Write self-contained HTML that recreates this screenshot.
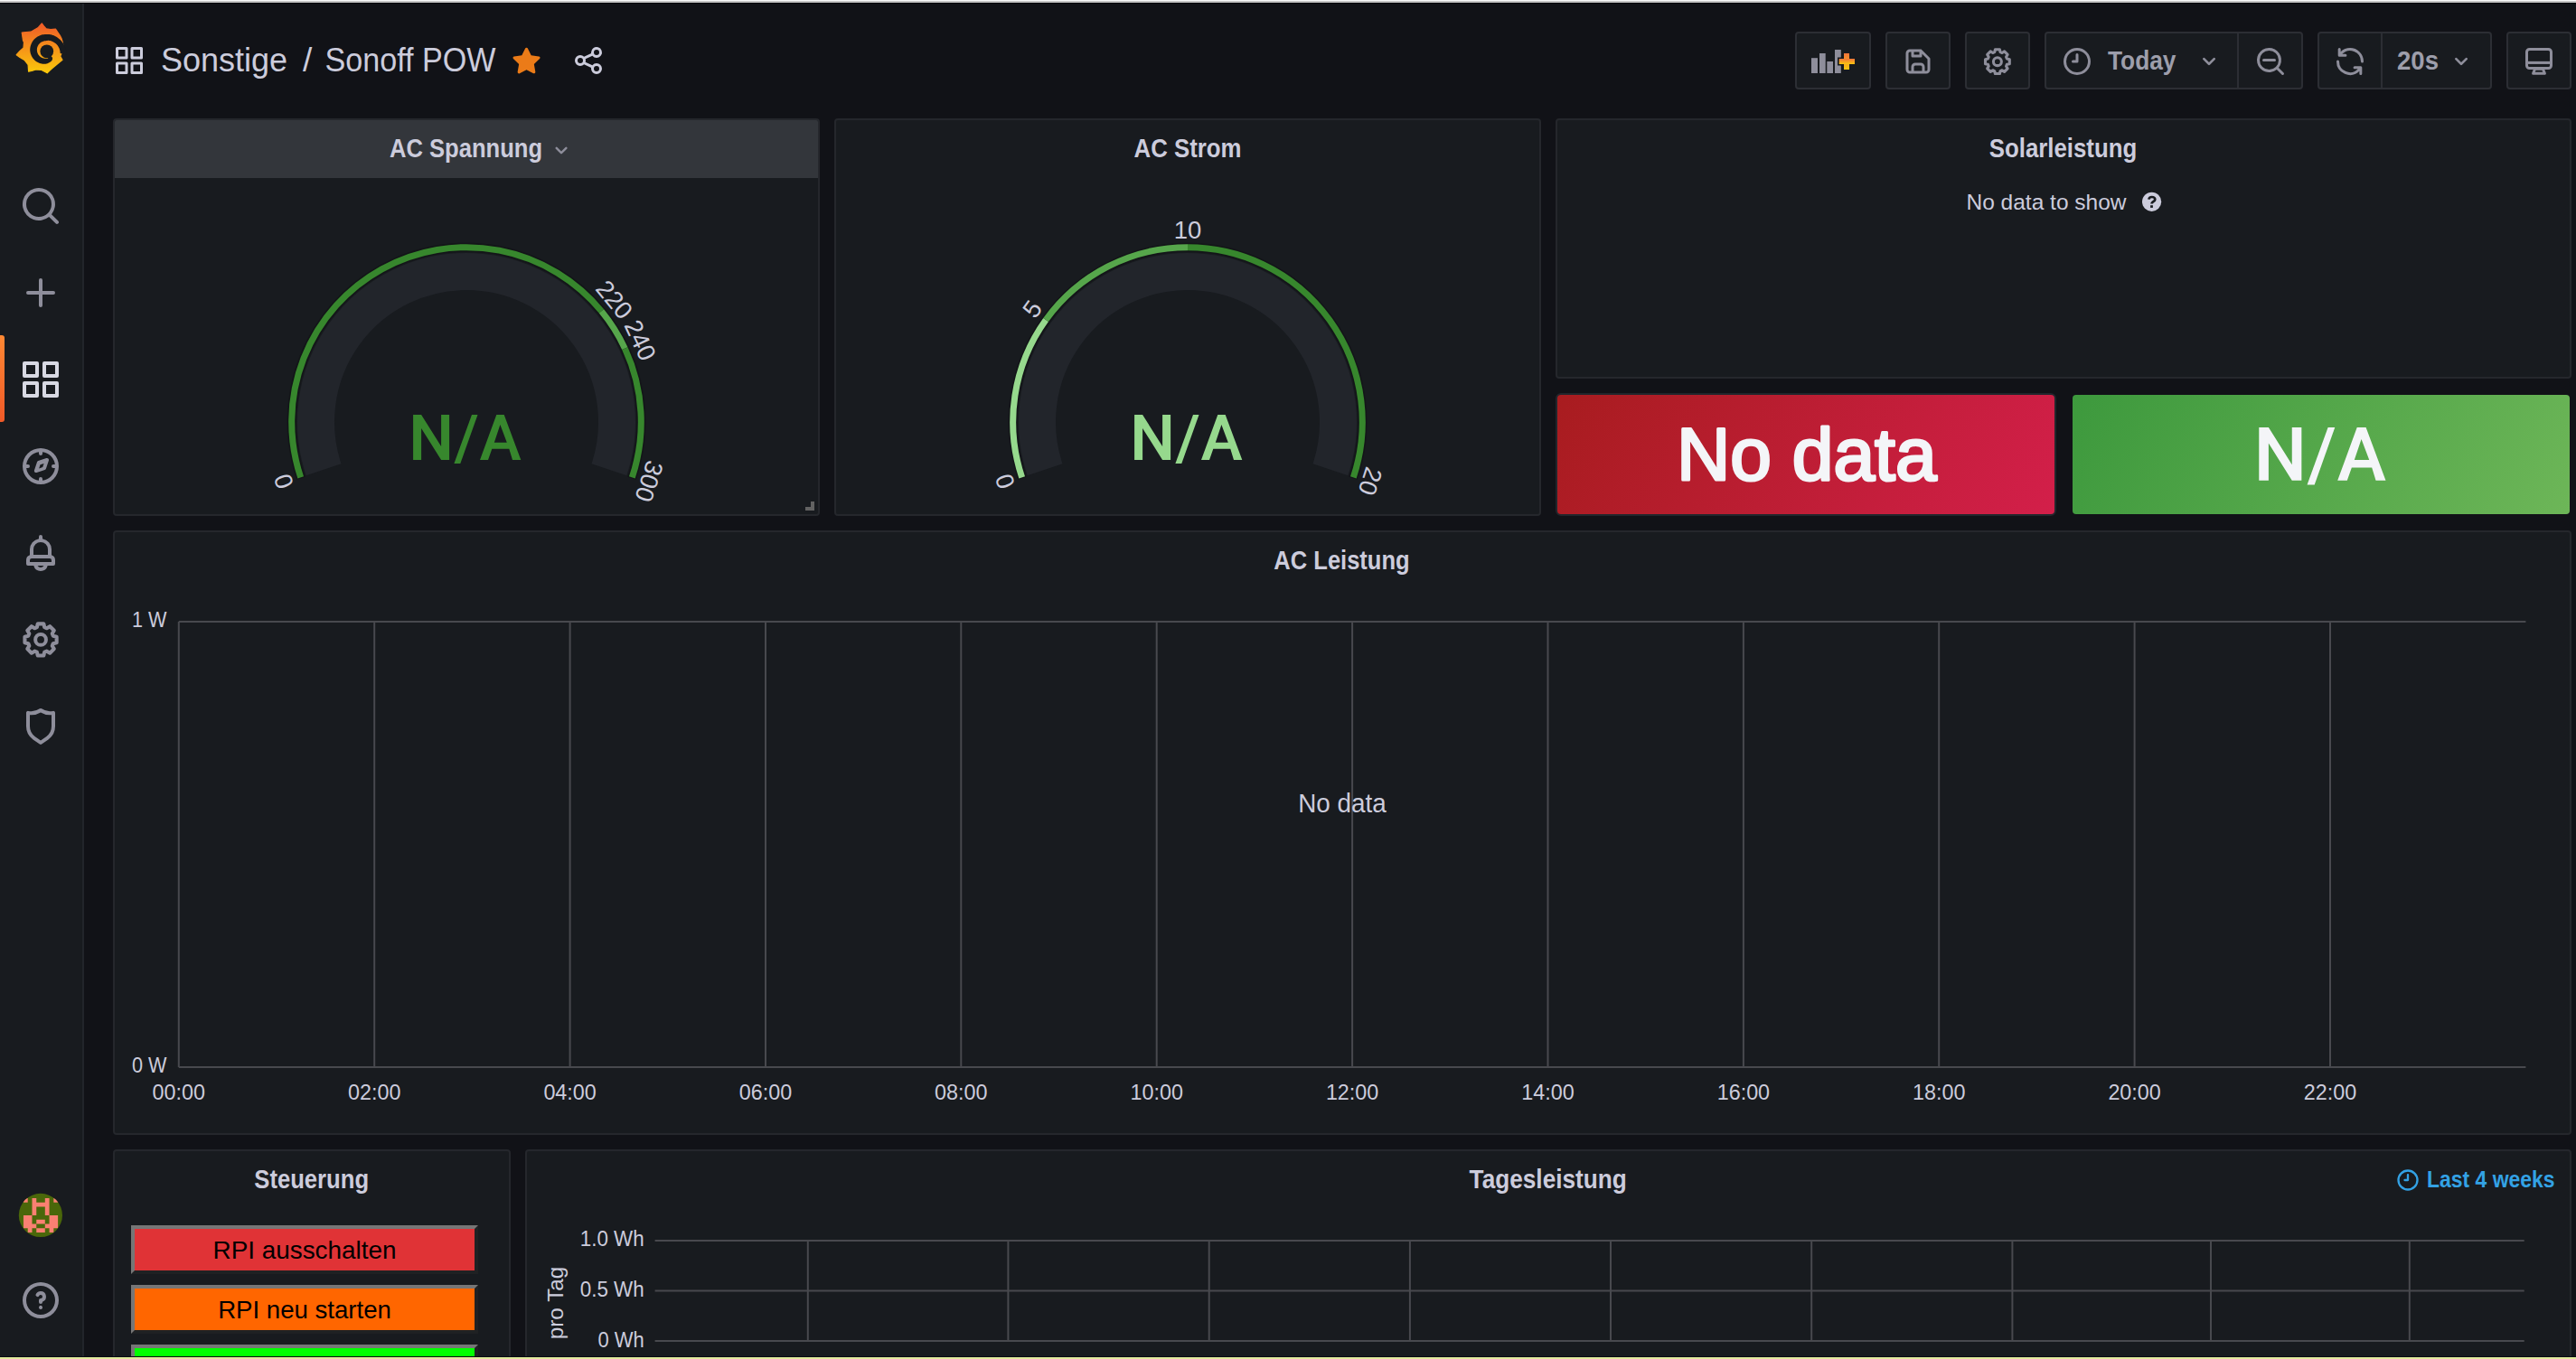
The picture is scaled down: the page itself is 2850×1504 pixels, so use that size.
<!DOCTYPE html>
<html><head><meta charset="utf-8"><title>Sonoff POW - Grafana</title>
<style>
html,body{margin:0;padding:0;width:2850px;height:1504px;overflow:hidden;background:#111217;font-family:"Liberation Sans", sans-serif;}
.abs{position:absolute;box-sizing:border-box;}
.panel{position:absolute;box-sizing:border-box;background:#181b1f;border:2px solid #25272c;border-radius:4px;}
.btn{position:absolute;box-sizing:border-box;background:#181b1f;border:2px solid #2c2e34;border-radius:4px;}
svg{position:absolute;left:0;top:0;}
svg text{font-family:"Liberation Sans", sans-serif;}
.rbtn{position:absolute;box-sizing:border-box;border-style:solid;border-width:4px;border-color:#767676 #1f2123 #1f2123 #767676;}
</style></head><body>

<div class="abs" style="left:0;top:0;width:2850px;height:1px;background:#fafafa"></div>
<div class="abs" style="left:0;top:1px;width:2850px;height:2px;background:#c6c6c6"></div>
<div class="abs" style="left:0;top:3px;width:2850px;height:1px;background:#06070b"></div>
<div class="abs" style="left:0;top:1501px;width:2850px;height:1px;background:#080a14"></div>
<div class="abs" style="left:0;top:1502px;width:2850px;height:2px;background:#e2ea9c"></div>
<div class="abs" style="left:0;top:4px;width:91px;height:1497px;background:#181b1f"></div>
<div class="abs" style="left:91px;top:4px;width:2px;height:1497px;background:#22252b"></div>
<div class="abs" style="left:0;top:371px;width:5px;height:96px;border-radius:0 3px 3px 0;background:linear-gradient(#ff8833,#f05a28)"></div>
<div class="panel" style="left:125.0px;top:131px;width:782.0px;height:440px"></div>
<div class="panel" style="left:923.0px;top:131px;width:782.0px;height:440px"></div>
<div class="panel" style="left:1721.0px;top:131px;width:1124.0px;height:288px"></div>
<div class="panel" style="left:125.0px;top:587px;width:2720.0px;height:669px"></div>
<div class="panel" style="left:125.0px;top:1272px;width:440.0px;height:400px"></div>
<div class="panel" style="left:581.0px;top:1272px;width:2264.0px;height:400px"></div>
<div class="abs" style="left:127px;top:133px;width:778.0px;height:64px;background:#33363b;border-radius:2px 2px 0 0"></div>
<div class="panel" style="left:1721.0px;top:435px;width:554.0px;height:136px;background:linear-gradient(120deg,#a81c1f,#d31f4a);border-color:#22262c;border-radius:6px"></div>
<div class="abs" style="left:2293.0px;top:437px;width:550.0px;height:132px;border-radius:4px;background:linear-gradient(120deg,#3d993d,#6db658)"></div>
<div class="btn" style="left:1986px;top:35px;width:84px;height:64px"></div>
<div class="btn" style="left:2086px;top:35px;width:72px;height:64px"></div>
<div class="btn" style="left:2174px;top:35px;width:72px;height:64px"></div>
<div class="btn" style="left:2262px;top:35px;width:286px;height:64px"></div>
<div class="btn" style="left:2564px;top:35px;width:193px;height:64px"></div>
<div class="btn" style="left:2773px;top:35px;width:72px;height:64px"></div>
<div class="abs" style="left:2475px;top:37px;width:2px;height:60px;background:#2c2e34"></div>
<div class="abs" style="left:2634px;top:37px;width:2px;height:60px;background:#2c2e34"></div>
<div class="rbtn" style="left:145px;top:1356px;width:384px;height:54px;background:#e03336"></div>
<div class="rbtn" style="left:145px;top:1422px;width:384px;height:54px;background:#ff6600"></div>
<div class="rbtn" style="left:145px;top:1488px;width:384px;height:54px;background:#00ff00"></div>
<svg width="2850" height="1504" viewBox="0 0 2850 1504">
<defs>
<linearGradient id="lg" x1="0" y1="0" x2="0" y2="1"><stop offset="0" stop-color="#f05a28"/><stop offset="1" stop-color="#fbca0a"/></linearGradient>
<linearGradient id="pg" x1="0" y1="0" x2="0" y2="1"><stop offset="0" stop-color="#f2733a"/><stop offset="1" stop-color="#fbc70f"/></linearGradient>
</defs>
<polygon fill="url(#lg)" stroke="url(#lg)" stroke-width="1.2" stroke-linejoin="round" points="46.3,25.9 49,29.5 51.2,31.8 56,32.5 61.5,32.1 63.8,35.5 66.2,39 67.9,42.2 69.3,47 70.2,53 68.5,58 66.7,62.2 69,66.4 63.5,70.8 58.4,75.1 55,78 52.2,80.8 46,77.5 39.9,76.9 35,78.5 31.6,79.2 31.1,71.5 27,66.4 22,63.5 18.2,60.7 22,56.5 26,53 26.5,46.8 25.5,44.7 24.2,36 29,35.5 34.2,35.2 38,33 41.9,30.8"/>
<path fill="#181b1f" d="M58.21,64.69 L57.93,65.73 L57.53,66.78 L56.92,67.61 L56.14,68.23 L55.31,68.80 L54.42,69.31 L53.49,69.76 L52.51,70.15 L51.49,70.47 L50.43,70.71 L49.36,70.77 L48.27,70.76 L47.19,70.67 L46.10,70.50 L45.02,70.26 L43.95,69.93 L42.90,69.53 L41.88,69.06 L40.89,68.50 L39.93,67.88 L39.01,67.18 L38.15,66.40 L37.36,65.56 L36.61,64.66 L35.94,63.70 L35.32,62.69 L34.78,61.64 L34.31,60.54 L33.92,59.41 L33.61,58.25 L33.38,57.07 L33.23,55.86 L33.21,54.65 L33.31,53.43 L33.49,52.23 L33.75,51.04 L34.10,49.88 L34.52,48.73 L35.03,47.63 L35.61,46.55 L36.27,45.53 L37.00,44.55 L37.79,43.62 L38.65,42.75 L39.57,41.94 L40.54,41.20 L41.57,40.53 L42.64,39.93 L43.75,39.41 L44.89,38.97 L46.06,38.61 L47.26,38.33 L48.47,38.13 L49.69,38.02 L50.92,37.96 L52.16,37.89 L53.42,37.91 L54.68,38.01 L55.94,38.22 L57.19,38.51 L58.43,38.89 L59.65,39.36 L60.84,39.93 L61.99,40.58 L63.11,41.31 L64.19,42.12 L65.31,42.93 L66.37,43.84 L67.39,44.83 L68.34,45.92 L69.22,47.08 L70.02,48.32 L70.74,49.63 L71.37,51.01 L72.00,52.43 L72.61,53.91 L73.13,55.47 L73.53,57.09 L73.81,58.77 L73.98,60.49 L66.64,58.93 L66.57,57.75 L66.41,56.60 L66.18,55.48 L65.86,54.40 L65.48,53.36 L65.01,52.38 L64.48,51.44 L63.89,50.57 L63.25,49.76 L62.57,49.02 L61.84,48.34 L61.07,47.73 L60.28,47.19 L59.47,46.73 L58.69,46.28 L57.91,45.88 L57.10,45.55 L56.29,45.28 L55.48,45.08 L54.66,44.94 L53.85,44.86 L53.05,44.84 L52.26,44.88 L51.49,44.98 L50.75,45.14 L50.02,45.23 L49.31,45.32 L48.60,45.46 L47.91,45.65 L47.24,45.88 L46.58,46.17 L45.95,46.49 L45.34,46.86 L44.77,47.27 L44.23,47.72 L43.72,48.20 L43.24,48.71 L42.81,49.26 L42.42,49.83 L42.06,50.43 L41.76,51.05 L41.50,51.69 L41.28,52.34 L41.11,53.00 L40.99,53.67 L40.92,54.35 L40.89,55.03 L40.91,55.70 L40.96,56.37 L41.07,57.04 L41.21,57.69 L41.41,58.33 L41.65,58.96 L41.93,59.56 L42.25,60.14 L42.61,60.70 L43.01,61.23 L43.44,61.73 L43.91,62.20 L44.40,62.64 L44.92,63.04 L45.47,63.41 L46.04,63.73 L46.64,64.02 L47.25,64.26 L47.87,64.46 L48.51,64.61 L49.15,64.72 L49.81,64.78 L50.46,64.80 L51.12,64.87 L51.79,64.89 L52.46,64.87 L53.14,64.80 L53.82,64.68 L54.49,64.51 L55.16,64.29 L55.89,64.15 L56.73,64.08 L57.57,63.93Z"/>
<circle cx="51.8" cy="56.8" r="7.4" fill="#181b1f"/>
<path fill="#181b1f" d="M51.80,56.80 L58.20,64.05 L57.74,64.44 L57.26,64.80 L56.76,65.14 L56.25,65.46 L55.72,65.75 L55.18,66.01 L54.62,66.24 L54.05,66.44 L53.48,66.61Z"/>
<path d="M40.84,694.18 L41.79,690.35 L48.31,690.35 L49.26,694.18 L51.81,695.24 L55.19,693.20 L59.80,697.81 L57.76,701.19 L58.82,703.74 L62.65,704.69 L62.65,711.21 L58.82,712.16 L57.76,714.71 L59.80,718.09 L55.19,722.70 L51.81,720.66 L49.26,721.72 L48.31,725.55 L41.79,725.55 L40.84,721.72 L38.29,720.66 L34.91,722.70 L30.30,718.09 L32.34,714.71 L31.28,712.16 L27.45,711.21 L27.45,704.69 L31.28,703.74 L32.34,701.19 L30.30,697.81 L34.91,693.20 L38.29,695.24Z" fill="none" stroke="#8e8e9b" stroke-width="4.10" stroke-linejoin="round"/><circle cx="45.05" cy="707.95" r="5.90" fill="none" stroke="#8e8e9b" stroke-width="4.00"/>
<path transform="translate(21.00,204.00) scale(2.0000)" d="M21.71,20.29,18,16.61A9,9,0,1,0,16.61,18l3.68,3.68a1,1,0,0,0,1.42,0A1,1,0,0,0,21.71,20.29ZM11,18a7,7,0,1,1,7-7A7,7,0,0,1,11,18Z" fill="#8e8e9b" />
<path transform="translate(21.00,300.00) scale(2.0000)" d="M19,11H13V5a1,1,0,0,0-2,0v6H5a1,1,0,0,0,0,2h6v6a1,1,0,0,0,2,0V13h6a1,1,0,0,0,0-2Z" fill="#8e8e9b" />
<path transform="translate(21.00,396.00) scale(2.0000)" d="M10,13H3a1,1,0,0,0-1,1v7a1,1,0,0,0,1,1h7a1,1,0,0,0,1-1V14A1,1,0,0,0,10,13ZM9,20H4V15H9ZM21,2H14a1,1,0,0,0-1,1v7a1,1,0,0,0,1,1h7a1,1,0,0,0,1-1V3A1,1,0,0,0,21,2ZM20,9H15V4h5Zm1,4H14a1,1,0,0,0-1,1v7a1,1,0,0,0,1,1h7a1,1,0,0,0,1-1V14A1,1,0,0,0,21,13Zm-1,7H15V15h5ZM10,2H3A1,1,0,0,0,2,3v7a1,1,0,0,0,1,1h7a1,1,0,0,0,1-1V3A1,1,0,0,0,10,2ZM9,9H4V4H9Z" fill="#d8d9e3" />
<path transform="translate(21.00,588.00) scale(2.0000)" d="M18,13.18V10a6,6,0,0,0-5-5.91V3a1,1,0,0,0-2,0V4.09A6,6,0,0,0,6,10v3.18A3,3,0,0,0,4,16v2a1,1,0,0,0,1,1H8.14a4,4,0,0,0,7.72,0H19a1,1,0,0,0,1-1V16A3,3,0,0,0,18,13.18ZM8,10a4,4,0,0,1,8,0v3H8Zm4,10a2,2,0,0,1-1.72-1h3.44A2,2,0,0,1,12,20Zm6-3H6V16a1,1,0,0,1,1-1H17a1,1,0,0,1,1,1Z" fill="#8e8e9b" />
<path transform="translate(21.00,780.00) scale(2.0000)" d="M19.63,3.65a1,1,0,0,0-.84-.2,8,8,0,0,1-6.22-1.27,1,1,0,0,0-1.14,0A8,8,0,0,1,5.210,3.45a1,1,0,0,0-.84.2A1,1,0,0,0,4,4.43v7.45a9,9,0,0,0,3.77,7.33l3.65,2.6a1,1,0,0,0,1.16,0l3.65-2.6A9,9,0,0,0,20,11.88V4.43A1,1,0,0,0,19.63,3.65ZM18,11.88a7,7,0,0,1-2.93,5.7L12,19.77,8.930,17.58A7,7,0,0,1,6,11.88V5.58a10,10,0,0,0,6-1.39,10,10,0,0,0,6,1.39Z" fill="#8e8e9b" />
<path transform="translate(21.00,492.00) scale(2.0000)" d="M12,2A10,10,0,1,0,22,12,10.011,10.011,0,0,0,12,2Zm1,17.93V19a1,1,0,0,0-2,0v.93A8.009,8.009,0,0,1,4.07,13H5a1,1,0,0,0,0-2H4.07A8.009,8.009,0,0,1,11,4.07V5a1,1,0,0,0,2,0V4.07A8.009,8.009,0,0,1,19.93,11H19a1,1,0,0,0,0,2h.93A8.009,8.009,0,0,1,13,19.93ZM15.146,7.48l-4.5,1.5a1,1,0,0,0-.633.633l-1.5,4.5A1,1,0,0,0,9.5,15.5a1.012,1.012,0,0,0,.316-.051l4.5-1.5a1,1,0,0,0,.633-.633l1.5-4.5a1,1,0,0,0-1.266-1.266Zm-2.036,5.036-2.021.673.673-2.021,2.021-.673Z" fill="#8e8e9b" />
<clipPath id="avc"><circle cx="44.9" cy="1344.9" r="24.1"/></clipPath>
<g clip-path="url(#avc)"><rect x="20" y="1320" width="50" height="50" fill="#4a670a"/><path d="M25.95,1325.95h4.77v4.77h-4.77ZM35.49,1325.95h4.77v4.77h-4.77ZM49.80,1325.95h4.77v4.77h-4.77ZM59.34,1325.95h4.77v4.77h-4.77ZM35.49,1330.72h4.77v4.77h-4.77ZM40.26,1330.72h4.77v4.77h-4.77ZM45.03,1330.72h4.77v4.77h-4.77ZM49.80,1330.72h4.77v4.77h-4.77ZM35.49,1335.49h4.77v4.77h-4.77ZM49.80,1335.49h4.77v4.77h-4.77ZM35.49,1340.26h4.77v4.77h-4.77ZM49.80,1340.26h4.77v4.77h-4.77ZM25.95,1345.03h4.77v4.77h-4.77ZM30.72,1345.03h4.77v4.77h-4.77ZM54.57,1345.03h4.77v4.77h-4.77ZM59.34,1345.03h4.77v4.77h-4.77ZM25.95,1349.80h4.77v4.77h-4.77ZM30.72,1349.80h4.77v4.77h-4.77ZM40.26,1349.80h4.77v4.77h-4.77ZM45.03,1349.80h4.77v4.77h-4.77ZM54.57,1349.80h4.77v4.77h-4.77ZM59.34,1349.80h4.77v4.77h-4.77ZM25.95,1354.57h4.77v4.77h-4.77ZM30.72,1354.57h4.77v4.77h-4.77ZM35.49,1354.57h4.77v4.77h-4.77ZM49.80,1354.57h4.77v4.77h-4.77ZM54.57,1354.57h4.77v4.77h-4.77ZM59.34,1354.57h4.77v4.77h-4.77ZM30.72,1359.34h4.77v4.77h-4.77ZM40.26,1359.34h4.77v4.77h-4.77ZM45.03,1359.34h4.77v4.77h-4.77ZM54.57,1359.34h4.77v4.77h-4.77Z" fill="#fa8072"/></g>
<path transform="translate(21.00,1415.00) scale(2.0000)" d="M11.29,15.29a1.58,1.58,0,0,0-.12.15.76.76,0,0,0-.09.18.64.64,0,0,0-.06.18,1.36,1.36,0,0,0,0,.2.84.84,0,0,0,.08.38.9.9,0,0,0,.54.54.94.94,0,0,0,.76,0,.9.9,0,0,0,.54-.54A1,1,0,0,0,13,16a1,1,0,0,0-.29-.71A1,1,0,0,0,11.29,15.29ZM12,2A10,10,0,1,0,22,12,10,10,0,0,0,12,2Zm0,18a8,8,0,1,1,8-8A8,8,0,0,1,12,20ZM12,7A3,3,0,0,0,9.4,8.5a1,1,0,1,0,1.730,1A1,1,0,0,1,12,9a1,1,0,0,1,0,2,1,1,0,0,0-1,1v1a1,1,0,0,0,2,0v-.18A3,3,0,0,0,12,7Z" fill="#8e8e9b" />
<path transform="translate(125.00,49.00) scale(1.5000)" d="M10,13H3a1,1,0,0,0-1,1v7a1,1,0,0,0,1,1h7a1,1,0,0,0,1-1V14A1,1,0,0,0,10,13ZM9,20H4V15H9ZM21,2H14a1,1,0,0,0-1,1v7a1,1,0,0,0,1,1h7a1,1,0,0,0,1-1V3A1,1,0,0,0,21,2ZM20,9H15V4h5Zm1,4H14a1,1,0,0,0-1,1v7a1,1,0,0,0,1,1h7a1,1,0,0,0,1-1V14A1,1,0,0,0,21,13Zm-1,7H15V15h5ZM10,2H3A1,1,0,0,0,2,3v7a1,1,0,0,0,1,1h7a1,1,0,0,0,1-1V3A1,1,0,0,0,10,2ZM9,9H4V4H9Z" fill="#ccccdc" />
<text x="178" y="79" font-size="37" fill="#ccccdc" font-weight="normal" text-anchor="start" textLength="140" lengthAdjust="spacingAndGlyphs" >Sonstige</text>
<text x="335" y="79" font-size="37" fill="#ccccdc" font-weight="normal" text-anchor="start" >/</text>
<text x="359.5" y="79" font-size="37" fill="#ccccdc" font-weight="normal" text-anchor="start" textLength="189" lengthAdjust="spacingAndGlyphs" >Sonoff POW</text>
<path transform="translate(564.50,49.00) scale(1.5000)" d="M22,9.67A1,1,0,0,0,21.14,9l-5.69-.83L12.9,3a1,1,0,0,0-1.8,0L8.55,8.16,2.86,9a1,1,0,0,0-.81.68,1,1,0,0,0,.25,1l4.13,4-1,5.68A1,1,0,0,0,6.9,21.44L12,18.77l5.1,2.67a.930.93,0,0,0,.46.12,1,1,0,0,0,.59-.19,1,1,0,0,0,.4-1l-1-5.68,4.13-4A1,1,0,0,0,22,9.67Z" fill="#eb7b18" />
<path transform="translate(633.00,49.00) scale(1.5000)" d="M18,14a4,4,0,0,0-3.08,1.48l-5.1-2.35a3.64,3.64,0,0,0,0-2.26l5.1-2.35A4,4,0,1,0,14,6a4.170,4.170,0,0,0,.07.71L8.79,9.14a4,4,0,1,0,0,5.72l5.28,2.43A4.170,4.170,0,0,0,14,18a4,4,0,1,0,4-4ZM18,4a2,2,0,1,1-2,2A2,2,0,0,1,18,4ZM6,14a2,2,0,1,1,2-2A2,2,0,0,1,6,14Zm12,6a2,2,0,1,1,2-2A2,2,0,0,1,18,20Z" fill="#ccccdc" />
<rect x="2004" y="64.2" width="7.0" height="16.8" fill="#8e8e9b"/>
<rect x="2013" y="59" width="6.7" height="22.0" fill="#8e8e9b"/>
<rect x="2021.3" y="68" width="6.7" height="13.0" fill="#8e8e9b"/>
<rect x="2030" y="55" width="6.8" height="26.0" fill="#8e8e9b"/>
<rect x="2038.5" y="57.5" width="9" height="21" fill="#181b1f"/><rect x="2033" y="63.5" width="20.5" height="9" fill="#181b1f"/>
<rect x="2040" y="59" width="6" height="18" fill="url(#pg)"/><rect x="2034.7" y="65" width="17.3" height="6" fill="url(#pg)"/>
<path transform="translate(2104.00,50.00) scale(1.5000)" d="M20.71,9.29l-6-6a1,1,0,0,0-.32-.21A1.09,1.09,0,0,0,14,3H6A3,3,0,0,0,3,6V18a3,3,0,0,0,3,3H18a3,3,0,0,0,3-3V10A1,1,0,0,0,20.71,9.29ZM9,5h4V7H9Zm6,14H9V16a1,1,0,0,1,1-1h4a1,1,0,0,1,1,1Zm4-1a1,1,0,0,1-1,1H17V16a3,3,0,0,0-3-3H10a3,3,0,0,0-3,3v3H6a1,1,0,0,1-1-1V6A1,1,0,0,1,6,5H7V8A1,1,0,0,0,8,9h6a1,1,0,0,0,1-1V6.41l4,4Z" fill="#8e8e9b" />
<path d="M2206.70,57.68 L2207.42,54.77 L2212.38,54.77 L2213.10,57.68 L2215.04,58.49 L2217.61,56.94 L2221.11,60.44 L2219.56,63.01 L2220.37,64.95 L2223.28,65.67 L2223.28,70.63 L2220.37,71.35 L2219.56,73.29 L2221.11,75.86 L2217.61,79.36 L2215.04,77.81 L2213.10,78.62 L2212.38,81.53 L2207.42,81.53 L2206.70,78.62 L2204.76,77.81 L2202.19,79.36 L2198.69,75.86 L2200.24,73.29 L2199.43,71.35 L2196.52,70.63 L2196.52,65.67 L2199.43,64.95 L2200.24,63.01 L2198.69,60.44 L2202.19,56.94 L2204.76,58.49Z" fill="none" stroke="#8e8e9b" stroke-width="3.12" stroke-linejoin="round"/><circle cx="2209.9" cy="68.15" r="4.48" fill="none" stroke="#8e8e9b" stroke-width="3.04"/>
<path transform="translate(2280.00,50.00) scale(1.5000)" d="M12,2A10,10,0,1,0,22,12,10.011,10.011,0,0,0,12,2Zm0,18a8,8,0,1,1,8-8A8.009,8.009,0,0,1,12,20ZM12,6a1,1,0,0,0-1,1v4H9a1,1,0,0,0,0,2h3a1,1,0,0,0,1-1V7A1,1,0,0,0,12,6Z" fill="#8e8e9b" />
<text x="2332" y="77" font-size="29.8" fill="#9d9eab" font-weight="bold" text-anchor="start" textLength="75.5" lengthAdjust="spacingAndGlyphs" >Today</text>
<path transform="translate(2428.00,52.00) scale(1.3333)" d="M17,9.17a1,1,0,0,0-1.41,0L12,12.71,8.46,9.17a1,1,0,0,0-1.41,0,1,1,0,0,0,0,1.42l4.24,4.24a1,1,0,0,0,1.42,0L17,10.59A1,1,0,0,0,17,9.17Z" fill="#8e8e9b" />
<path transform="translate(2494.00,50.00) scale(1.5000)" d="M21.71,20.29,18,16.61A9,9,0,1,0,16.61,18l3.68,3.68a1,1,0,0,0,1.42,0A1,1,0,0,0,21.71,20.29ZM11,18a7,7,0,1,1,7-7A7,7,0,0,1,11,18Zm4-8H7a1,1,0,0,0,0,2h8a1,1,0,0,0,0-2Z" fill="#8e8e9b" />
<path transform="translate(2582.00,50.00) scale(1.5000)" d="M19.91,15.51H15.38a1,1,0,0,0,0,2h2.4A8,8,0,0,1,4,12a1,1,0,0,0-2,0,10,10,0,0,0,16.88,7.23V21a1,1,0,0,0,2,0V16.5A1,1,0,0,0,19.91,15.51ZM12,2A10,10,0,0,0,5.12,4.77V3a1,1,0,0,0-2,0V7.5a1,1,0,0,0,1,1h4.5a1,1,0,0,0,0-2H6.22A8,8,0,0,1,20,12a1,1,0,0,0,2,0A10,10,0,0,0,12,2Z" fill="#8e8e9b" />
<text x="2652" y="77" font-size="29.8" fill="#9d9eab" font-weight="bold" text-anchor="start" textLength="46" lengthAdjust="spacingAndGlyphs" >20s</text>
<path transform="translate(2707.00,52.00) scale(1.3333)" d="M17,9.17a1,1,0,0,0-1.41,0L12,12.71,8.46,9.17a1,1,0,0,0-1.41,0,1,1,0,0,0,0,1.42l4.24,4.24a1,1,0,0,0,1.42,0L17,10.59A1,1,0,0,0,17,9.17Z" fill="#8e8e9b" />
<rect x="2795.5" y="54.5" width="27" height="21" rx="3" fill="none" stroke="#8e8e9b" stroke-width="3"/>
<line x1="2796" y1="69.4" x2="2822" y2="69.4" stroke="#8e8e9b" stroke-width="3.1"/>
<path d="M2804.6,76.2 L2813.4,76.2 L2815.4,81.3 L2802.6,81.3 Z" fill="none" stroke="#8e8e9b" stroke-width="3" stroke-linejoin="round"/>
<path d="M358.10,519.83 A166.5,166.5 0 1 1 673.90,519.83" fill="none" stroke="#22252b" stroke-width="41"/><path d="M333.01,529.29 A193.3,193.3 0 1 1 698.99,529.29" fill="none" stroke="#131518" stroke-width="10"/><path d="M332.69,528.33 A193.3,193.3 0 0 1 665.44,344.39" fill="none" stroke="#37872d" stroke-width="7"/><path d="M665.44,344.39 A193.3,193.3 0 0 1 691.33,385.61" fill="none" stroke="#56a64b" stroke-width="7"/><path d="M691.33,385.61 A193.3,193.3 0 0 1 699.31,528.33" fill="none" stroke="#37872d" stroke-width="7"/><g transform="translate(313.42,532.82) rotate(-108.00)"><text x="0" y="10" font-size="27.5" fill="#ccccdc" text-anchor="middle">0</text></g><g transform="translate(680.12,331.23) rotate(50.40)"><text x="0" y="10" font-size="27.5" fill="#ccccdc" text-anchor="middle">220</text></g><g transform="translate(708.73,376.31) rotate(64.80)"><text x="0" y="10" font-size="27.5" fill="#ccccdc" text-anchor="middle">240</text></g><g transform="translate(718.58,532.82) rotate(108.00)"><text x="0" y="10" font-size="27.5" fill="#ccccdc" text-anchor="middle">300</text></g><polygon points="457.10,509.00 457.10,459.00 466.10,459.00 488.10,494.00 488.10,459.00 497.10,459.00 497.10,509.00 488.10,509.00 466.10,473.90 466.10,509.00" fill="#37872d"/><polygon points="522.00,459.00 528.50,459.00 509.30,513.00 502.40,513.00" fill="#37872d"/><path fill-rule="evenodd" d="M531.00,509.00 L549.30,459.00 L557.70,459.00 L576.30,509.00 L567.00,509.00 L563.30,496.80 L544.30,496.80 L540.00,509.00 Z M553.40,470.10 L560.80,489.70 L546.80,489.70 Z" fill="#37872d"/>
<path d="M1156.10,519.83 A166.5,166.5 0 1 1 1471.90,519.83" fill="none" stroke="#22252b" stroke-width="41"/><path d="M1131.01,529.29 A193.3,193.3 0 1 1 1496.99,529.29" fill="none" stroke="#131518" stroke-width="10"/><path d="M1130.69,528.33 A193.3,193.3 0 0 1 1157.12,354.06" fill="none" stroke="#96d98d" stroke-width="7"/><path d="M1157.12,354.06 A193.3,193.3 0 0 1 1314.00,273.70" fill="none" stroke="#56a64b" stroke-width="7"/><path d="M1314.00,273.70 A193.3,193.3 0 0 1 1497.31,528.33" fill="none" stroke="#37872d" stroke-width="7"/><g transform="translate(1111.42,532.82) rotate(-108.00)"><text x="0" y="10" font-size="27.5" fill="#ccccdc" text-anchor="middle">0</text></g><g transform="translate(1141.68,341.80) rotate(-54.00)"><text x="0" y="10" font-size="27.5" fill="#ccccdc" text-anchor="middle">5</text></g><g transform="translate(1314.00,254.00) rotate(0.00)"><text x="0" y="10" font-size="27.5" fill="#ccccdc" text-anchor="middle">10</text></g><g transform="translate(1516.58,532.82) rotate(108.00)"><text x="0" y="10" font-size="27.5" fill="#ccccdc" text-anchor="middle">20</text></g><polygon points="1255.10,509.00 1255.10,459.00 1264.10,459.00 1286.10,494.00 1286.10,459.00 1295.10,459.00 1295.10,509.00 1286.10,509.00 1264.10,473.90 1264.10,509.00" fill="#96d98d"/><polygon points="1320.00,459.00 1326.50,459.00 1307.30,513.00 1300.40,513.00" fill="#96d98d"/><path fill-rule="evenodd" d="M1329.00,509.00 L1347.30,459.00 L1355.70,459.00 L1374.30,509.00 L1365.00,509.00 L1361.30,496.80 L1342.30,496.80 L1338.00,509.00 Z M1351.40,470.10 L1358.80,489.70 L1344.80,489.70 Z" fill="#96d98d"/>
<text x="431" y="174" font-size="29" fill="#ccccdc" font-weight="bold" text-anchor="start" textLength="169" lengthAdjust="spacingAndGlyphs" >AC Spannung</text>
<path transform="translate(606.00,151.50) scale(1.2500)" d="M17,9.17a1,1,0,0,0-1.41,0L12,12.71,8.46,9.17a1,1,0,0,0-1.41,0,1,1,0,0,0,0,1.42l4.24,4.24a1,1,0,0,0,1.42,0L17,10.59A1,1,0,0,0,17,9.17Z" fill="#8e8e9b" />
<text x="1314" y="174" font-size="29" fill="#ccccdc" font-weight="bold" text-anchor="middle" textLength="119" lengthAdjust="spacingAndGlyphs" >AC Strom</text>
<text x="2282.5" y="174" font-size="29" fill="#ccccdc" font-weight="bold" text-anchor="middle" textLength="163.5" lengthAdjust="spacingAndGlyphs" >Solarleistung</text>
<text x="2264" y="232" font-size="24.5" fill="#ccccdc" font-weight="normal" text-anchor="middle" textLength="177" lengthAdjust="spacingAndGlyphs" >No data to show</text>
<circle cx="2380.6" cy="223.3" r="10.6" fill="#ccccdc"/>
<path d="M2377.4,220.6 C2377.6,218.7 2379.1,218.0 2380.8,218.0 C2382.8,218.0 2384.3,219.2 2384.3,220.7 C2384.3,222.4 2382.7,222.9 2381.7,223.6 C2381.0,224.1 2380.5,224.6 2380.5,225.6" fill="none" stroke="#181b1f" stroke-width="2.7"/><rect x="2379.1" y="227.2" width="2.8" height="2.7" fill="#181b1f"/>
<path d="M897,555h4v10h-10v-4h6Z" fill="#626262"/>
<text x="1998.8" y="530.5" font-size="82" fill="#f4f5f8" font-weight="normal" text-anchor="middle" textLength="287.5" lengthAdjust="spacingAndGlyphs" stroke="#f4f5f8" stroke-width="3" stroke-linejoin="round">No data</text>
<polygon points="2499.30,531.80 2499.30,473.00 2509.88,473.00 2535.76,514.16 2535.76,473.00 2546.34,473.00 2546.34,531.80 2535.76,531.80 2509.88,490.52 2509.88,531.80" fill="#f4f5f8"/><polygon points="2575.62,473.00 2583.27,473.00 2560.69,536.50 2552.57,536.50" fill="#f4f5f8"/><path fill-rule="evenodd" d="M2586.21,531.80 L2607.73,473.00 L2617.61,473.00 L2639.48,531.80 L2628.54,531.80 L2624.19,517.45 L2601.85,517.45 L2596.79,531.80 Z M2612.55,486.05 L2621.25,509.10 L2604.79,509.10 Z" fill="#f4f5f8"/>
<text x="1484.5" y="630" font-size="29" fill="#ccccdc" font-weight="bold" text-anchor="middle" textLength="150.3" lengthAdjust="spacingAndGlyphs" >AC Leistung</text>
<line x1="197.8" y1="688" x2="2794.4" y2="688" stroke="#48494e" stroke-width="2"/><line x1="197.8" y1="1181" x2="2794.4" y2="1181" stroke="#48494e" stroke-width="2"/><line x1="197.8" y1="688" x2="197.8" y2="1181" stroke="#48494e" stroke-width="2"/><line x1="414.2" y1="688" x2="414.2" y2="1181" stroke="#48494e" stroke-width="2"/><line x1="630.6" y1="688" x2="630.6" y2="1181" stroke="#48494e" stroke-width="2"/><line x1="847.0" y1="688" x2="847.0" y2="1181" stroke="#48494e" stroke-width="2"/><line x1="1063.3" y1="688" x2="1063.3" y2="1181" stroke="#48494e" stroke-width="2"/><line x1="1279.7" y1="688" x2="1279.7" y2="1181" stroke="#48494e" stroke-width="2"/><line x1="1496.1" y1="688" x2="1496.1" y2="1181" stroke="#48494e" stroke-width="2"/><line x1="1712.5" y1="688" x2="1712.5" y2="1181" stroke="#48494e" stroke-width="2"/><line x1="1928.9" y1="688" x2="1928.9" y2="1181" stroke="#48494e" stroke-width="2"/><line x1="2145.2" y1="688" x2="2145.2" y2="1181" stroke="#48494e" stroke-width="2"/><line x1="2361.6" y1="688" x2="2361.6" y2="1181" stroke="#48494e" stroke-width="2"/><line x1="2578.0" y1="688" x2="2578.0" y2="1181" stroke="#48494e" stroke-width="2"/>
<text x="184.5" y="694" font-size="24.7" fill="#ccccdc" font-weight="normal" text-anchor="end" textLength="38.5" lengthAdjust="spacingAndGlyphs" >1 W</text>
<text x="184.5" y="1187" font-size="24.7" fill="#ccccdc" font-weight="normal" text-anchor="end" textLength="38.5" lengthAdjust="spacingAndGlyphs" >0 W</text>
<text x="197.8" y="1217" font-size="24.7" fill="#ccccdc" font-weight="normal" text-anchor="middle" textLength="58.4" lengthAdjust="spacingAndGlyphs" >00:00</text>
<text x="414.2" y="1217" font-size="24.7" fill="#ccccdc" font-weight="normal" text-anchor="middle" textLength="58.4" lengthAdjust="spacingAndGlyphs" >02:00</text>
<text x="630.6" y="1217" font-size="24.7" fill="#ccccdc" font-weight="normal" text-anchor="middle" textLength="58.4" lengthAdjust="spacingAndGlyphs" >04:00</text>
<text x="847.0" y="1217" font-size="24.7" fill="#ccccdc" font-weight="normal" text-anchor="middle" textLength="58.4" lengthAdjust="spacingAndGlyphs" >06:00</text>
<text x="1063.3" y="1217" font-size="24.7" fill="#ccccdc" font-weight="normal" text-anchor="middle" textLength="58.4" lengthAdjust="spacingAndGlyphs" >08:00</text>
<text x="1279.7" y="1217" font-size="24.7" fill="#ccccdc" font-weight="normal" text-anchor="middle" textLength="58.4" lengthAdjust="spacingAndGlyphs" >10:00</text>
<text x="1496.1" y="1217" font-size="24.7" fill="#ccccdc" font-weight="normal" text-anchor="middle" textLength="58.4" lengthAdjust="spacingAndGlyphs" >12:00</text>
<text x="1712.5" y="1217" font-size="24.7" fill="#ccccdc" font-weight="normal" text-anchor="middle" textLength="58.4" lengthAdjust="spacingAndGlyphs" >14:00</text>
<text x="1928.9" y="1217" font-size="24.7" fill="#ccccdc" font-weight="normal" text-anchor="middle" textLength="58.4" lengthAdjust="spacingAndGlyphs" >16:00</text>
<text x="2145.2" y="1217" font-size="24.7" fill="#ccccdc" font-weight="normal" text-anchor="middle" textLength="58.4" lengthAdjust="spacingAndGlyphs" >18:00</text>
<text x="2361.6" y="1217" font-size="24.7" fill="#ccccdc" font-weight="normal" text-anchor="middle" textLength="58.4" lengthAdjust="spacingAndGlyphs" >20:00</text>
<text x="2578.0" y="1217" font-size="24.7" fill="#ccccdc" font-weight="normal" text-anchor="middle" textLength="58.4" lengthAdjust="spacingAndGlyphs" >22:00</text>
<text x="1485" y="899" font-size="29" fill="#ccccdc" font-weight="normal" text-anchor="middle" textLength="97.5" lengthAdjust="spacingAndGlyphs" >No data</text>
<text x="344.7" y="1315" font-size="29" fill="#ccccdc" font-weight="bold" text-anchor="middle" textLength="126.8" lengthAdjust="spacingAndGlyphs" >Steuerung</text>
<text x="337" y="1393" font-size="27.6" fill="#000" font-weight="normal" text-anchor="middle" textLength="203" lengthAdjust="spacingAndGlyphs" >RPI ausschalten</text>
<text x="337" y="1459" font-size="27.6" fill="#000" font-weight="normal" text-anchor="middle" >RPI neu starten</text>
<text x="1712.7" y="1315" font-size="29" fill="#ccccdc" font-weight="bold" text-anchor="middle" textLength="174.2" lengthAdjust="spacingAndGlyphs" >Tagesleistung</text>
<path transform="translate(2650.00,1292.00) scale(1.1667)" d="M12,2A10,10,0,1,0,22,12,10.011,10.011,0,0,0,12,2Zm0,18a8,8,0,1,1,8-8A8.009,8.009,0,0,1,12,20ZM12,6a1,1,0,0,0-1,1v4H9a1,1,0,0,0,0,2h3a1,1,0,0,0,1-1V7A1,1,0,0,0,12,6Z" fill="#33a2e5" />
<text x="2685" y="1314.3" font-size="25.5" fill="#33a2e5" font-weight="bold" text-anchor="start" textLength="141.5" lengthAdjust="spacingAndGlyphs" >Last 4 weeks</text>
<line x1="724.6" y1="1373" x2="2792.7" y2="1373" stroke="#48494e" stroke-width="2"/><line x1="724.6" y1="1428.5" x2="2792.7" y2="1428.5" stroke="#48494e" stroke-width="2"/><line x1="724.6" y1="1484" x2="2792.7" y2="1484" stroke="#48494e" stroke-width="2"/><line x1="893.8" y1="1373" x2="893.8" y2="1484" stroke="#48494e" stroke-width="2"/><line x1="1115.4" y1="1373" x2="1115.4" y2="1484" stroke="#48494e" stroke-width="2"/><line x1="1337.7" y1="1373" x2="1337.7" y2="1484" stroke="#48494e" stroke-width="2"/><line x1="1559.9" y1="1373" x2="1559.9" y2="1484" stroke="#48494e" stroke-width="2"/><line x1="1782" y1="1373" x2="1782" y2="1484" stroke="#48494e" stroke-width="2"/><line x1="2004.2" y1="1373" x2="2004.2" y2="1484" stroke="#48494e" stroke-width="2"/><line x1="2226.4" y1="1373" x2="2226.4" y2="1484" stroke="#48494e" stroke-width="2"/><line x1="2446" y1="1373" x2="2446" y2="1484" stroke="#48494e" stroke-width="2"/><line x1="2665.8" y1="1373" x2="2665.8" y2="1484" stroke="#48494e" stroke-width="2"/>
<text x="712.7" y="1379.2" font-size="24.7" fill="#ccccdc" font-weight="normal" text-anchor="end" textLength="71" lengthAdjust="spacingAndGlyphs" >1.0 Wh</text>
<text x="712.7" y="1435" font-size="24.7" fill="#ccccdc" font-weight="normal" text-anchor="end" textLength="71" lengthAdjust="spacingAndGlyphs" >0.5 Wh</text>
<text x="712.7" y="1491" font-size="24.7" fill="#ccccdc" font-weight="normal" text-anchor="end" textLength="51.3" lengthAdjust="spacingAndGlyphs" >0 Wh</text>
<g transform="translate(622.5,1442) rotate(-90)"><text x="0" y="0" font-size="24.7" fill="#ccccdc" font-weight="normal" text-anchor="middle" textLength="80.6" lengthAdjust="spacingAndGlyphs" >pro Tag</text></g>
</svg>
<div class="abs" style="left:0;top:1501px;width:2850px;height:1px;background:#080a14"></div>
<div class="abs" style="left:0;top:1502px;width:2850px;height:2px;background:#e2ea9c"></div>
</body></html>
